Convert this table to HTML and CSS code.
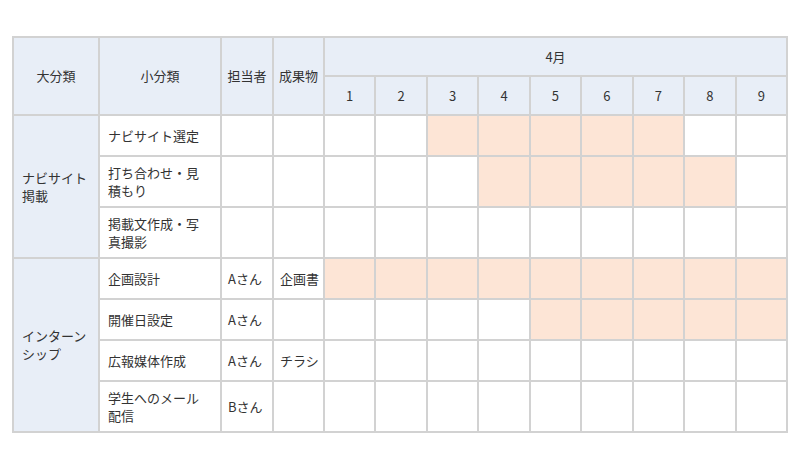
FILE: index.html
```html
<!DOCTYPE html>
<html lang="ja">
<head>
    <meta charset="UTF-8">
    <title>スケジュール</title>
    <link rel="stylesheet" href="styles.css">
</head>
<body>
    <table class="schedule">
        <colgroup>
            <col class="c-big">
            <col class="c-small">
            <col class="c-person">
            <col class="c-output">
            <col span="9">
        </colgroup>
        <thead>
            <tr class="h-row">
                <th rowspan="2">大分類</th>
                <th rowspan="2">小分類</th>
                <th rowspan="2" class="narrow">担当者</th>
                <th rowspan="2" class="narrow">成果物</th>
                <th colspan="9">4月</th>
            </tr>
            <tr class="h-row">
                <th>1</th><th>2</th><th>3</th><th>4</th><th>5</th><th>6</th><th>7</th><th>8</th><th>9</th>
            </tr>
        </thead>
        <tbody>
            <!-- ナビサイト掲載 -->
            <tr class="r-short">
                <td rowspan="3" class="cat">ナビサイト掲載</td>
                <td>ナビサイト選定</td>
                <td class="narrow"></td>
                <td class="narrow"></td>
                <td></td><td></td><td class="on"></td><td class="on"></td><td class="on"></td><td class="on"></td><td class="on"></td><td></td><td></td>
            </tr>
            <tr class="r-tall">
                <td>打ち合わせ・見積もり</td>
                <td class="narrow"></td>
                <td class="narrow"></td>
                <td></td><td></td><td></td><td class="on"></td><td class="on"></td><td class="on"></td><td class="on"></td><td class="on"></td><td></td>
            </tr>
            <tr class="r-tall">
                <td>掲載文作成・写真撮影</td>
                <td class="narrow"></td>
                <td class="narrow"></td>
                <td></td><td></td><td></td><td></td><td></td><td></td><td></td><td></td><td></td>
            </tr>
            <!-- インターンシップ -->
            <tr class="r-short">
                <td rowspan="4" class="cat">インターンシップ</td>
                <td>企画設計</td>
                <td class="narrow">Aさん</td>
                <td class="narrow">企画書</td>
                <td class="on"></td><td class="on"></td><td class="on"></td><td class="on"></td><td class="on"></td><td class="on"></td><td class="on"></td><td class="on"></td><td class="on"></td>
            </tr>
            <tr class="r-short">
                <td>開催日設定</td>
                <td class="narrow">Aさん</td>
                <td class="narrow"></td>
                <td></td><td></td><td></td><td></td><td class="on"></td><td class="on"></td><td class="on"></td><td class="on"></td><td class="on"></td>
            </tr>
            <tr class="r-short">
                <td>広報媒体作成</td>
                <td class="narrow">Aさん</td>
                <td class="narrow">チラシ</td>
                <td></td><td></td><td></td><td></td><td></td><td></td><td></td><td></td><td></td>
            </tr>
            <tr class="r-tall">
                <td>学生へのメール配信</td>
                <td class="narrow">Bさん</td>
                <td class="narrow"></td>
                <td></td><td></td><td></td><td></td><td></td><td></td><td></td><td></td><td></td>
            </tr>
        </tbody>
    </table>
</body>
</html>
```

FILE: styles.css
```css
/* ページ全体 */
body {
    margin: 36px 12px 0;
    background: #fff;
    font-family: "Noto Sans CJK JP", "Noto Sans", sans-serif;
    font-size: 13px;
    color: #333;
}

/* スケジュール表 */
.schedule {
    width: 776px;
    table-layout: fixed;
    border-collapse: collapse;
    border: 2px solid #d2d2d2;
}
.c-big { width: 86px; }
.c-small { width: 122px; }
.c-person { width: 52px; }
.c-output { width: 51px; }

.schedule th,
.schedule td {
    border: 2px solid #d2d2d2;
    padding: 0 16px 0 8px;
    line-height: 18px;
    vertical-align: middle;
    text-align: left;
    font-weight: normal;
}
.schedule th {
    background: #e8eef7;
    text-align: center;
    padding: 0;
}
.schedule .narrow {
    padding: 0 2px 0 6px;
    white-space: nowrap;
}
.schedule th.narrow {
    padding: 0;
}

/* 行の高さ */
.h-row { height: 39px; }
.r-short { height: 41px; }
.r-tall { height: 51px; }

/* 大分類セル */
.schedule .cat {
    background: #e8eef7;
    padding-right: 8px;
}

/* 期間バー */
.schedule .on {
    background: #fde5d6;
}
```
